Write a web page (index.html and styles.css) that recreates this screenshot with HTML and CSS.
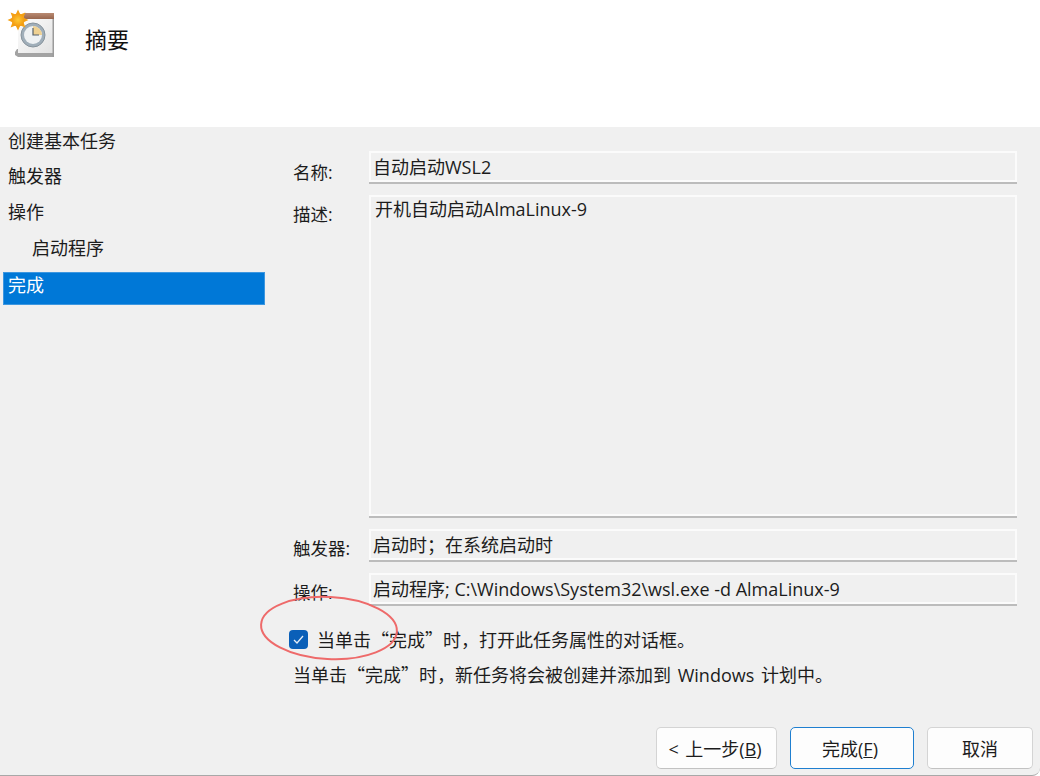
FILE: index.html
```html
<!DOCTYPE html>
<html lang="zh-CN">
<head>
    <meta charset="UTF-8">
    <title>创建基本任务向导</title>
    <link rel="stylesheet" href="styles.css">
</head>
<body>

<div class="header">
    <svg class="header-icon" width="50" height="50" viewBox="6 8 50 50">
        <defs>
            <linearGradient id="page" x1="0" y1="0" x2="1" y2="1">
                <stop offset="0" stop-color="#ffffff"/>
                <stop offset="1" stop-color="#e2e2e2"/>
            </linearGradient>
            <linearGradient id="bar" x1="0" y1="0" x2="0" y2="1">
                <stop offset="0" stop-color="#b98a72"/>
                <stop offset="1" stop-color="#98664e"/>
            </linearGradient>
            <radialGradient id="sun">
                <stop offset="0" stop-color="#ffc933"/>
                <stop offset="1" stop-color="#f39a10"/>
            </radialGradient>
        </defs>
        <path d="M17 49h37v8H18l-3-2v-3z" fill="#a3a3a3"/>
        <rect x="18" y="14" width="35" height="39" fill="url(#page)"/>
        <rect x="52.500" y="13" width="1.500" height="44" fill="#9b9b9b"/>
        <rect x="24" y="13" width="30" height="6" fill="url(#bar)"/>
        <circle cx="33" cy="35" r="12" fill="#a0aeb9" stroke="#87939c"/>
        <circle cx="33" cy="35" r="9" fill="#eef1f3"/>
        <path d="M33 35V26a9 9 0 0 1 9 9z" fill="#efd192"/>
        <path d="M33 28v7h6" fill="none" stroke="#55606a" stroke-width="1.200"/>
        <polygon points="28.500,20 23.500,22.300 25.400,27.400 20.300,25.500 18,30.500 15.700,25.500 10.600,27.400 12.500,22.300 7.500,20 12.500,17.700 10.600,12.600 15.700,14.500 18,9.500 20.300,14.500 25.400,12.600 23.500,17.700" fill="#f4a013"/>
        <circle cx="18" cy="20" r="6.500" fill="url(#sun)"/>
    </svg>
    <h1 class="header-title">摘要</h1>
</div>

<div class="content">
    <div class="sidebar">
        <div class="step step-first">创建基本任务</div>
        <div class="step">触发器</div>
        <div class="step">操作</div>
        <div class="step step-sub">启动程序</div>
        <div class="step step-active">完成</div>
    </div>

    <div class="main">
        <div class="row row-name">
            <span class="label">名称:</span>
            <div class="field">自动启动WSL2</div>
        </div>
        <div class="row row-desc">
            <span class="label">描述:</span>
            <div class="field field-multi">开机自动启动AlmaLinux-9</div>
        </div>
        <div class="row row-trigger">
            <span class="label">触发器:</span>
            <div class="field">启动时；在系统启动时</div>
        </div>
        <div class="row row-trigger">
            <span class="label">操作:</span>
            <div class="field">启动程序; C:\Windows\System32\wsl.exe -d AlmaLinux-9</div>
        </div>

        <div class="check-row">
            <span class="checkbox">
                <svg width="19" height="19" viewBox="0 0 19 19"><path d="M5 10l3 3 6-7" fill="none" stroke="#e4edf7" stroke-width="1.300"/></svg>
            </span>
            <span>当单击<span class="cjk">“</span>完成<span class="cjk">”</span>时，打开此任务属性的对话框。</span>
        </div>
        <p class="note">当单击<span class="cjk">“</span>完成<span class="cjk">”</span>时，新任务将会被创建并添加到 Windows 计划中。</p>

        <div class="buttons">
            <button class="btn btn-back">&lt; 上一步(<u>B</u>)</button>
            <button class="btn btn-finish">完成(<u>F</u>)</button>
            <button class="btn btn-cancel">取消</button>
        </div>
    </div>
</div>

<svg class="marker" width="150" height="100" viewBox="0 0 150 100">
    <ellipse cx="75" cy="50" rx="68" ry="31" fill="none" stroke="#ee6a6a" stroke-width="2" transform="rotate(3 75 50)"/>
</svg>

</body>
</html>
```

FILE: styles.css
```css
* {
    box-sizing: border-box;
}

body {
    margin: 0;
    height: 776px;
    position: relative;
    overflow: hidden;
    display: flex;
    flex-direction: column;
    font-family: "Open Sans", "Noto Sans CJK SC", sans-serif;
    font-size: 18px;
    color: #1c1c1c;
    background-color: #ffffff;
}

.cjk {
    font-family: "Noto Sans CJK SC", sans-serif;
}

.header {
    height: 127px;
    flex: none;
    background-color: #ffffff;
    display: flex;
    align-items: flex-start;
    padding: 8px 0 0 6px;
}

.header-title {
    margin: 15px 0 0 29px;
    font-size: 22px;
    line-height: 32px;
    font-weight: 400;
    color: #111;
}

.content {
    flex: 1;
    display: flex;
    background-color: #f0f0f0;
    border-bottom: 1px solid #a8a8a8;
    border-bottom-right-radius: 8px;
}

.sidebar {
    width: 265px;
    flex: none;
    padding-left: 3px;
}

.step {
    height: 33px;
    margin-bottom: 3px;
    padding-left: 5px;
    line-height: 26px;
}

.step-first {
    margin-top: 1px;
    margin-bottom: 2px;
}

.step-sub {
    padding-left: 29px;
    margin-bottom: 4px;
}

.step-active {
    background-color: #0078d7;
    border: 1px solid #3d97e0;
    padding-left: 4px;
    line-height: 24px;
    color: #fff;
}

.main {
    flex: 1;
    padding: 24px 23px 0 28px;
    display: flex;
    flex-direction: column;
}

.row {
    display: flex;
    height: 33px;
    margin-bottom: 11px;
}

.row-desc {
    height: 321px;
    margin-bottom: 13px;
}

.row-desc .label,
.row-trigger .label {
    padding-top: 6px;
}

.label {
    width: 76px;
    flex: none;
    padding-top: 8px;
    line-height: 26px;
    font-size: 17.500px;
}

.field {
    flex: 1;
    height: 31px;
    border: 2px solid #fbfbfb;
    box-shadow: 0 2px 0 #bcbcbc;
    padding-left: 2px;
    line-height: 28px;
    white-space: nowrap;
}

.field-multi {
    height: 321px;
    padding: 0 0 0 4px;
    line-height: 24px;
}

.check-row {
    display: flex;
    align-items: center;
    height: 28px;
    margin-top: 8px;
    margin-left: -4px;
}

.checkbox {
    width: 19px;
    height: 19px;
    margin-right: 9px;
    border-radius: 4px;
    background-color: #0a5fb8;
    display: flex;
}

.note {
    margin: 7px 0 0;
    line-height: 28px;
    word-spacing: 2px;
}

.buttons {
    margin: 38px -16px 0 0;
    display: flex;
    justify-content: flex-end;
}

.btn {
    height: 42px;
    margin-left: 13px;
    font: inherit;
    font-size: 18px;
    color: #1c1c1c;
    background-color: #fdfdfd;
    border: 1px solid #d4d4d4;
    border-bottom-color: #c2c2c2;
    border-radius: 5px;
    padding: 0;
}

.btn-back {
    width: 121px;
    padding-right: 3px;
    word-spacing: 2px;
}

.btn-finish {
    width: 124px;
    padding-right: 4px;
    border: 1.500px solid #1f7fd0;
}

.btn-cancel {
    width: 106px;
}

.marker {
    position: absolute;
    left: 254px;
    top: 578px;
}
```
